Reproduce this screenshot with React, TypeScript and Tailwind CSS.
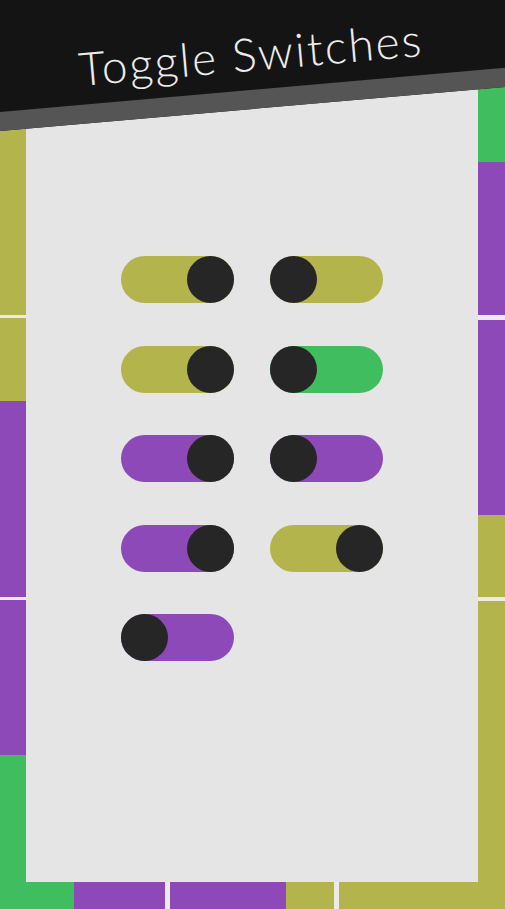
import { useState } from 'react'

type Tone = 'olive' | 'green' | 'purple'

const TONE_BG: Record<Tone, string> = {
  olive: 'bg-[#b3b44b]',
  green: 'bg-[#40be5f]',
  purple: 'bg-[#8e49b8]',
}

const INITIAL: { tone: Tone; on: boolean }[] = [
  { tone: 'olive', on: true },
  { tone: 'olive', on: false },
  { tone: 'olive', on: true },
  { tone: 'green', on: false },
  { tone: 'purple', on: true },
  { tone: 'purple', on: false },
  { tone: 'purple', on: true },
  { tone: 'olive', on: true },
  { tone: 'purple', on: false },
]

// edge tiles around the panel: [colour class, size in px]
const LEFT_TILES: [string, number][] = [
  ['bg-[#b3b44b]', 315],
  ['bg-[#ecece6]', 3],
  ['bg-[#b3b44b]', 83],
  ['bg-[#8e49b8]', 196],
  ['bg-[#ecece6]', 3],
  ['bg-[#8e49b8]', 155],
  ['bg-[#40be5f]', 127],
]

const RIGHT_TILES: [string, number][] = [
  ['bg-[#40be5f]', 162],
  ['bg-[#8e49b8]', 153],
  ['bg-[#ecece6]', 5],
  ['bg-[#8e49b8]', 195],
  ['bg-[#b3b44b]', 82],
  ['bg-[#ecece6]', 4],
  ['bg-[#b3b44b]', 281],
]

const BOTTOM_TILES: [string, number][] = [
  ['bg-[#40be5f]', 74],
  ['bg-[#8e49b8]', 91],
  ['bg-[#ecece6]', 5],
  ['bg-[#8e49b8]', 116],
  ['bg-[#b3b44b]', 48],
  ['bg-[#ecece6]', 5],
  ['bg-[#b3b44b]', 166],
]

function Toggle({ tone, on, onClick }: { tone: Tone; on: boolean; onClick: () => void }) {
  return (
    <button
      type="button"
      onClick={onClick}
      className={`flex h-[47px] w-[113px] rounded-full ${TONE_BG[tone]} ${on ? 'justify-end' : 'justify-start'}`}
    >
      <span className="block h-[47px] w-[47px] rounded-full bg-[#262626]" />
    </button>
  )
}

export default function App() {
  const [toggles, setToggles] = useState(INITIAL)

  const flip = (i: number) =>
    setToggles((prev) => prev.map((t, j) => (j === i ? { ...t, on: !t.on } : t)))

  return (
    <div className="relative flex h-[909px] w-[505px] flex-col overflow-hidden bg-[#ecece6]">
      <div className="flex h-[882px]">
        <div className="flex w-[26px] flex-col">
          {LEFT_TILES.map(([bg, h], i) => (
            <div key={i} className={bg} style={{ height: h }} />
          ))}
        </div>

        <div className="flex flex-1 justify-center bg-[#e5e5e5] pt-[256px]">
          <div className="grid grid-cols-[113px_113px] content-start gap-x-[36px] gap-y-[42.5px]">
            {toggles.map((t, i) => (
              <Toggle key={i} tone={t.tone} on={t.on} onClick={() => flip(i)} />
            ))}
          </div>
        </div>

        <div className="flex w-[27px] flex-col">
          {RIGHT_TILES.map(([bg, h], i) => (
            <div key={i} className={bg} style={{ height: h }} />
          ))}
        </div>
      </div>

      <div className="flex h-[27px]">
        {BOTTOM_TILES.map(([bg, w], i) => (
          <div key={i} className={bg} style={{ width: w }} />
        ))}
      </div>

      {/* slanted title banner */}
      <div className="absolute left-[-50px] top-[-91.5px] flex h-[200px] w-[605px] origin-bottom -rotate-5 items-end justify-center border-b-[19px] border-[#555555] bg-[#141414] pb-[13px] pl-[6px]">
        <h1 className="font-['Lato',sans-serif] text-[46px] font-light leading-none tracking-[2px] text-[#ececec]">
          Toggle Switches
        </h1>
      </div>
    </div>
  )
}
